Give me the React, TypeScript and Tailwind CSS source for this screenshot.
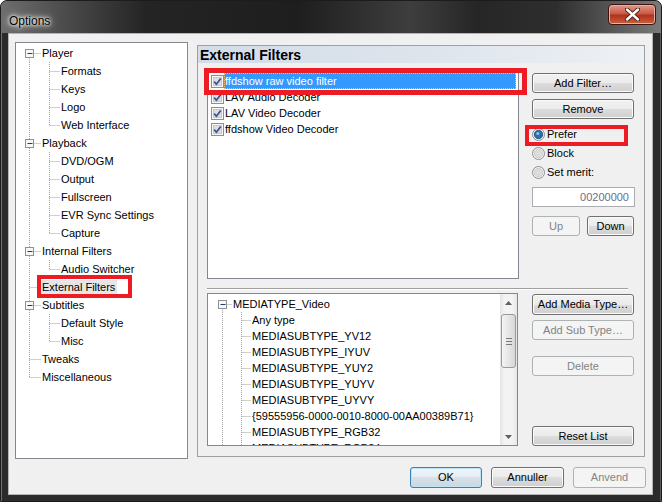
import React from 'react'
import clsx from 'clsx'

type TreeRow = {
  label: string
  level: 0 | 1
  expander?: boolean
  first?: boolean
  last?: boolean
  lastChild?: boolean
  selected?: boolean
}

type GutterCfg = { h: number; rootX: number; textX: number; childX: number; childTextX: number }

const dotted = { stroke: '#a0a0a0', strokeDasharray: '1 1', strokeWidth: 1 }

function Gutter({ row, cfg }: { row: TreeRow; cfg: GutterCfg }) {
  const { h, rootX, textX, childX, childTextX } = cfg
  const w = row.level === 0 ? textX : childTextX
  const mid = Math.floor(h / 2) + 0.5
  return (
    <svg width={w} height={h} className="shrink-0">
      <line
        x1={rootX}
        x2={rootX}
        y1={row.level === 0 && row.first ? mid : 0}
        y2={row.level === 0 && row.last ? mid : h}
        {...dotted}
      />
      {row.level === 0 && <line x1={rootX} x2={textX - 1} y1={mid} y2={mid} {...dotted} />}
      {row.level === 1 && (
        <>
          <line x1={childX} x2={childX} y1={0} y2={row.lastChild ? mid : h} {...dotted} />
          <line x1={childX} x2={childTextX - 1} y1={mid} y2={mid} {...dotted} />
        </>
      )}
      {row.expander && (
        <>
          <rect x={rootX - 4} y={mid - 4} width={8} height={8} fill="#f7f7f7" stroke="#919191" />
          <line x1={rootX - 2} x2={rootX + 3} y1={mid} y2={mid} stroke="#1e3c78" />
        </>
      )}
    </svg>
  )
}

function Tree({ rows, cfg }: { rows: TreeRow[]; cfg: GutterCfg }) {
  return (
    <>
      {rows.map((r, i) => (
        <div key={i} className="flex items-center" style={{ height: cfg.h }}>
          <Gutter row={r} cfg={cfg} />
          <span
            className={clsx(
              'px-[2px] -ml-[2px] leading-[15px] whitespace-nowrap text-black',
              r.selected && 'bg-[#e6e6e6]'
            )}
          >
            {r.label}
          </span>
        </div>
      ))}
    </>
  )
}

const pages: TreeRow[] = [
  { label: 'Player', level: 0, expander: true, first: true },
  { label: 'Formats', level: 1 },
  { label: 'Keys', level: 1 },
  { label: 'Logo', level: 1 },
  { label: 'Web Interface', level: 1, lastChild: true },
  { label: 'Playback', level: 0, expander: true },
  { label: 'DVD/OGM', level: 1 },
  { label: 'Output', level: 1 },
  { label: 'Fullscreen', level: 1 },
  { label: 'EVR Sync Settings', level: 1 },
  { label: 'Capture', level: 1, lastChild: true },
  { label: 'Internal Filters', level: 0, expander: true },
  { label: 'Audio Switcher', level: 1, lastChild: true },
  { label: 'External Filters', level: 0, selected: true },
  { label: 'Subtitles', level: 0, expander: true },
  { label: 'Default Style', level: 1 },
  { label: 'Misc', level: 1, lastChild: true },
  { label: 'Tweaks', level: 0 },
  { label: 'Miscellaneous', level: 0, last: true },
]

const mediaTypes: TreeRow[] = [
  { label: 'MEDIATYPE_Video', level: 0, expander: true, first: true },
  { label: 'Any type', level: 1 },
  { label: 'MEDIASUBTYPE_YV12', level: 1 },
  { label: 'MEDIASUBTYPE_IYUV', level: 1 },
  { label: 'MEDIASUBTYPE_YUY2', level: 1 },
  { label: 'MEDIASUBTYPE_YUYV', level: 1 },
  { label: 'MEDIASUBTYPE_UYVY', level: 1 },
  { label: '{59555956-0000-0010-8000-00AA00389B71}', level: 1 },
  { label: 'MEDIASUBTYPE_RGB32', level: 1 },
  { label: 'MEDIASUBTYPE_RGB24', level: 1 },
]

const filters = ['ffdshow raw video filter', 'LAV Audio Decoder', 'LAV Video Decoder', 'ffdshow Video Decoder']

function Btn({
  children,
  disabled,
  isDefault,
  className,
}: {
  children: React.ReactNode
  disabled?: boolean
  isDefault?: boolean
  className?: string
}) {
  return (
    <div
      className={clsx(
        'flex items-center justify-center rounded-[3px] border text-[11px] leading-none whitespace-nowrap',
        disabled
          ? 'border-[#adb2b5] bg-[#f4f4f4] text-[#838383]'
          : isDefault
            ? 'border-[#3c7fb1] text-black bg-[linear-gradient(#eef5fa_0%,#e4edf4_50%,#d6e1ea_50%,#cbd6df_100%)] shadow-[inset_0_0_0_1px_#bfe3f7]'
            : 'border-[#707070] text-black bg-[linear-gradient(#f2f2f2_0%,#ebebeb_50%,#dddddd_50%,#cfcfcf_100%)] shadow-[inset_0_0_0_1px_#fbfbfb]',
        className
      )}
    >
      {children}
    </div>
  )
}

function Check() {
  return (
    <svg width="13" height="13" viewBox="0 0 13 13" className="shrink-0">
      <rect x="0.5" y="0.5" width="12" height="12" fill="#f6f6f6" stroke="#8e8f8f" />
      <rect x="2.5" y="2.5" width="8" height="8" fill="#dedede" stroke="#c9c9c9" />
      <path d="M3.2 6.6 L5.4 9.2 L9.8 3.4" stroke="#3b4f8f" strokeWidth="1.7" fill="none" />
    </svg>
  )
}

function Radio({ checked }: { checked?: boolean }) {
  return (
    <svg width="13" height="13" viewBox="0 0 13 13" className="shrink-0">
      <circle cx="6.5" cy="6.5" r="6" fill="#f3f3f3" stroke="#8e8f8f" />
      <circle cx="6.5" cy="6.5" r="4.2" fill={checked ? '#2f6ea6' : '#dcdcdc'} stroke={checked ? '#1d4a78' : '#c8c8c8'} strokeWidth="0.8" />
      {checked && <circle cx="5.8" cy="5.6" r="1.5" fill="#8cc6f0" />}
    </svg>
  )
}

function ScrollArrow({ up }: { up?: boolean }) {
  return (
    <div className="h-[17px] flex items-center justify-center">
      <svg width="7" height="4" viewBox="0 0 7 4">
        <path d={up ? 'M0 4 L3.5 0 L7 4 Z' : 'M0 0 L3.5 4 L7 0 Z'} fill="#606060" />
      </svg>
    </div>
  )
}

function Scrollbar() {
  return (
    <div className="w-[17px] h-full shrink-0 flex flex-col bg-[linear-gradient(90deg,#e3e3e3,#f3f3f3_25%,#f3f3f3_75%,#e6e6e6)]">
      <ScrollArrow up />
      <div className="h-[3px]" />
      <div className="mx-[1px] h-[54px] rounded-[3px] border border-[#9a9a9a] bg-[linear-gradient(90deg,#f4f4f4,#e6e6e6_50%,#d6d6d6)] flex flex-col items-center justify-center gap-[2px]">
        <div className="w-[6px] h-[1px] bg-[#7a7a7a]" />
        <div className="w-[6px] h-[1px] bg-[#7a7a7a]" />
        <div className="w-[6px] h-[1px] bg-[#7a7a7a]" />
      </div>
      <div className="flex-1" />
      <ScrollArrow />
    </div>
  )
}

export default function App() {
  return (
    <div className="relative w-[662px] h-[502px] bg-white overflow-hidden font-['Liberation_Sans',Arial,sans-serif] text-[11px]">
      <div className="w-full h-full flex flex-col rounded-t-[7px] border border-[#1c1c1c] bg-[#2b2b2b] shadow-[inset_1px_1px_0_#707070,inset_-1px_0_0_#5a5a5a]">
        {/* title bar */}
        <div className="h-[32px] shrink-0 flex items-start rounded-t-[6px] bg-[linear-gradient(90deg,#6e6e6e_0%,#4a4a4a_10%,#242424_22%,#1e1e1e_45%,#3e3e3e_62%,#262626_72%,#2e2e2e_84%,#7a7a7a_100%)]">
          <span className="ml-[8px] mt-[14px] text-[12px] leading-none text-black [text-shadow:0_0_5px_#ffffff,0_0_3px_#ffffff,0_0_8px_#ffffff]">
            Options
          </span>
          <div className="ml-auto mr-[5px] mt-[3px] w-[48px] h-[21px] rounded-[4px] border border-[#3d1410] bg-[linear-gradient(#e09a8c_0%,#c75a45_45%,#b2321c_55%,#c8603e_100%)] shadow-[inset_0_0_0_1px_#e8b0a4] flex items-center justify-center">
            <svg width="15" height="13" viewBox="0 0 15 13">
              <path d="M2 1.5 L13 11.5 M13 1.5 L2 11.5" stroke="#3a1a14" strokeWidth="4.2" strokeLinecap="round" />
              <path d="M2 1.5 L13 11.5 M13 1.5 L2 11.5" stroke="#ffffff" strokeWidth="2.4" strokeLinecap="round" />
            </svg>
          </div>
        </div>

        {/* client area */}
        <div className="ml-[7px] w-[645px] h-[462px] border border-[#b4b4b4] bg-[#f0f0f0] flex flex-col pl-[6px] pt-[8px] pr-[6px]">
          <div className="flex items-start">
            {/* page tree */}
            <div className="w-[173px] h-[417px] shrink-0 border border-[#828790] bg-white pt-[1px] overflow-hidden">
              <Tree rows={pages} cfg={{ h: 18, rootX: 13.5, textX: 26, childX: 33.5, childTextX: 45 }} />
            </div>

            {/* page */}
            <div className="ml-[9px] mt-[3px] w-[448px] h-[412px] shrink-0 border border-[#a0a0a0] flex flex-col">
              <div className="h-[17px] shrink-0 flex items-center pl-[2px] bg-[linear-gradient(90deg,#d3dce7,#dde4ec_50%,#eef1f5)] text-[14px] font-bold leading-none text-black">
                External Filters
              </div>

              <div className="flex items-start mt-[5px] ml-[9px]">
                <div className="w-[312px] h-[211px] shrink-0 border border-[#828790] bg-white pt-[4px] pl-[3px] pr-[2px]">
                  {filters.map((f, i) => (
                    <div key={f} className="h-[16px] flex items-center">
                      <Check />
                      <span
                        className={clsx(
                          'h-[16px] flex items-center pl-[1px] leading-none whitespace-nowrap',
                          i === 0
                            ? 'flex-1 bg-[#3399ff] text-white outline outline-1 outline-dotted outline-[#f0c080] -outline-offset-1'
                            : 'text-black'
                        )}
                      >
                        {f}
                      </span>
                    </div>
                  ))}
                </div>

                <div className="ml-[13px] w-[103px] shrink-0 flex flex-col">
                  <Btn className="mt-[5px] h-[20px] w-[102px]">Add Filter…</Btn>
                  <Btn className="mt-[6px] h-[20px] w-[102px]">Remove</Btn>
                  <div className="mt-[6px] h-[19px] flex items-center gap-[2px]">
                    <Radio checked />
                    <span className="text-black">Prefer</span>
                  </div>
                  <div className="h-[19px] flex items-center gap-[2px]">
                    <Radio />
                    <span className="text-black">Block</span>
                  </div>
                  <div className="h-[19px] flex items-center gap-[2px]">
                    <Radio />
                    <span className="text-black">Set merit:</span>
                  </div>
                  <div className="mt-[5px] h-[20px] w-[103px] border border-[#abadb3] bg-white flex items-center justify-end pr-[5px] text-[#6d6d8a] leading-none">
                    00200000
                  </div>
                  <div className="mt-[9px] flex gap-[7px]">
                    <Btn disabled className="h-[20px] w-[48px]">Up</Btn>
                    <Btn className="h-[20px] w-[47px]">Down</Btn>
                  </div>
                </div>
              </div>

              <div className="ml-[9px] mt-[9px] w-[421px] h-[1px] bg-[#a0a0a0] shadow-[0_1px_0_#ffffff]" />

              <div className="flex items-start mt-[4px] ml-[9px]">
                <div className="w-[311px] h-[153px] shrink-0 border border-[#828790] bg-white flex overflow-hidden">
                  <div className="flex-1 pt-[2px] overflow-hidden">
                    <Tree rows={mediaTypes} cfg={{ h: 16, rootX: 14.5, textX: 25, childX: 33.5, childTextX: 44 }} />
                  </div>
                  <Scrollbar />
                </div>

                <div className="ml-[14px] w-[102px] h-[153px] shrink-0 flex flex-col">
                  <Btn className="mt-[1px] h-[21px]">Add Media Type…</Btn>
                  <Btn disabled className="mt-[5px] h-[20px]">Add Sub Type…</Btn>
                  <Btn disabled className="mt-[16px] h-[20px]">Delete</Btn>
                  <Btn className="mt-auto h-[20px]">Reset List</Btn>
                </div>
              </div>
            </div>
          </div>

          {/* dialog buttons */}
          <div className="mt-[8px] flex justify-end gap-[9px]">
            <Btn isDefault className="h-[21px] w-[72px]">OK</Btn>
            <Btn className="h-[21px] w-[73px]">Annuller</Btn>
            <Btn disabled className="h-[21px] w-[73px]">Anvend</Btn>
          </div>
        </div>
      </div>

      {/* red annotation boxes drawn over the screenshot */}
      <div className="absolute left-[204px] top-[68px] w-[323px] h-[27px] border-[5px] border-[#ed1c24]" />
      <div className="absolute left-[525px] top-[125px] w-[103px] h-[21px] border-[4px] border-[#ed1c24]" />
      <div className="absolute left-[37px] top-[275px] w-[95px] h-[23px] border-[4px] border-[#ed1c24]" />
    </div>
  )
}
